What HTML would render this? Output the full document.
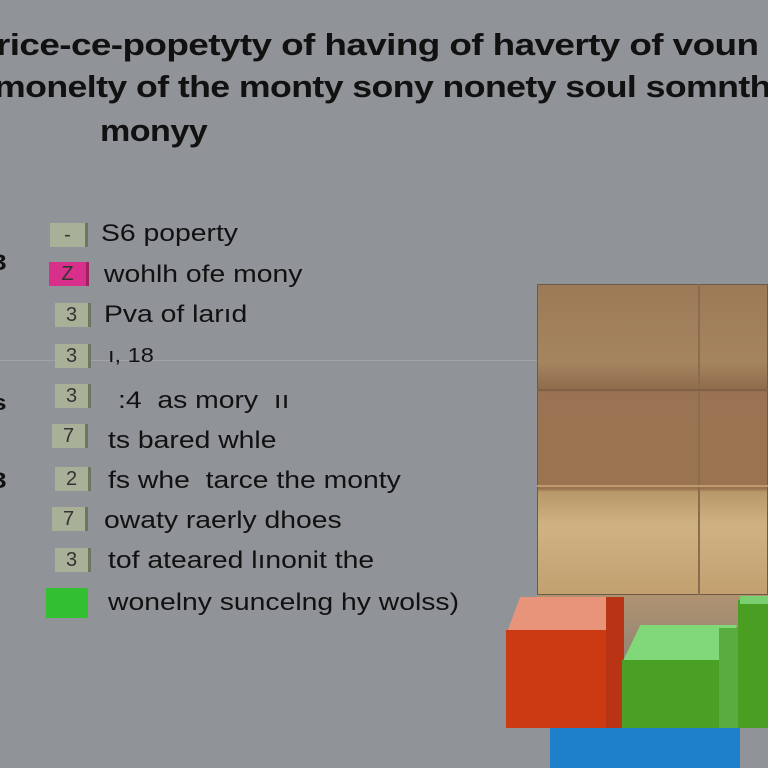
<!DOCTYPE html><html><head><style>
body{margin:0;width:768px;height:768px;overflow:hidden;background:#909397;font-family:"Liberation Sans",sans-serif;position:relative}
div{position:absolute}
.t{font-weight:bold;font-size:31px;color:#111;white-space:nowrap;letter-spacing:-0.5px;transform:scaleX(1.19);transform-origin:0 0}
.b{width:36px;height:24px;background:#a8b098;border-right:3px solid #6e7660;box-sizing:border-box;font-size:20px;text-align:center;line-height:24px;color:#333}
.l{font-size:24px;color:#111;white-space:nowrap;transform:scaleX(1.18);transform-origin:0 0}
</style></head><body>
<div class="t" style="left:-4px;top:27px">rice-ce-popetyty of having of haverty of voun</div>
<div class="t" style="left:-6px;top:69px;transform:scaleX(1.15)">monelty of the monty sony nonety soul somnth</div>
<div class="t" style="left:100px;top:113px;transform:scaleX(1.1)">monyy</div>
<div style="left:0;top:360px;width:537px;height:1px;background:#a2a4a8"></div>
<div class="b" style="left:50px;top:223px;width:38px">-</div><div class="l" style="left:101px;top:220px">S6 poperty</div>
<div class="b" style="left:49px;top:262px;width:40px;background:#d8308a;border-color:#a02060">Z</div><div class="l" style="left:104px;top:261px">wohlh ofe mony</div>
<div class="b" style="left:55px;top:303px">3</div><div class="l" style="left:104px;top:301px">Pva of larıd</div>
<div class="b" style="left:55px;top:344px">3</div><div class="l" style="left:108px;top:345px;font-size:20px">ı, 18</div>
<div class="b" style="left:55px;top:384px">3</div><div class="l" style="left:118px;top:387px">:4 &nbsp;as mory &nbsp;ıı</div>
<div class="b" style="left:52px;top:424px">7</div><div class="l" style="left:108px;top:427px">ts bared whle</div>
<div class="b" style="left:55px;top:467px">2</div><div class="l" style="left:108px;top:467px">fs whe &nbsp;tarce the monty</div>
<div class="b" style="left:52px;top:507px">7</div><div class="l" style="left:104px;top:507px">owaty raerly dhoes</div>
<div class="b" style="left:55px;top:548px">3</div><div class="l" style="left:108px;top:547px">tof ateared lınonit the</div>
<div style="left:46px;top:588px;width:42px;height:30px;background:#32c032"></div><div class="l" style="left:108px;top:589px">wonelny suncelng hy wolss)</div>
<div class="t" style="left:-8px;top:250px;font-size:22px">3</div>
<div class="t" style="left:-8px;top:390px;font-size:22px">s</div>
<div class="t" style="left:-8px;top:468px;font-size:22px">3</div>
<div style="left:537px;top:284px;width:231px;height:311px;border:1px solid #6b5a44;box-sizing:border-box;background:linear-gradient(#9c7a57 0,#a58460 25%,#8e6b4a 34%,#9a7452 35%,#9a7350 66%,#b89868 67%,#cfb283 78%,#c2a070 100%)"></div>
<div style="left:698px;top:284px;width:2px;height:311px;background:#8a6d4f"></div>
<div style="left:537px;top:389px;width:231px;height:2px;background:#7f6145"></div>
<div style="left:537px;top:485px;width:231px;height:2px;background:#c09a6a"></div>
<div style="left:537px;top:595px;width:231px;height:60px;background:linear-gradient(#b09270,#958676)"></div>
<div style="left:550px;top:715px;width:190px;height:53px;background:#1e7fcb"></div>
<div style="left:738px;top:600px;width:30px;height:128px;background:#4a9e22"></div>
<div style="left:740px;top:596px;width:28px;height:8px;background:#78d070"></div>
<div style="left:506px;top:597px;width:118px;height:38px;background:#e8947a;clip-path:polygon(0 100%,12% 0,100% 0,84% 100%)"></div>
<div style="left:506px;top:630px;width:103px;height:98px;background:#cc3a14"></div>
<div style="left:606px;top:597px;width:18px;height:131px;background:#b83414"></div>
<div style="left:622px;top:625px;width:115px;height:38px;background:#80d878;clip-path:polygon(0 100%,16% 0,100% 0,86% 100%)"></div>
<div style="left:622px;top:660px;width:100px;height:68px;background:#4aa024"></div>
<div style="left:719px;top:628px;width:19px;height:100px;background:#58ac40"></div>
</body></html>
